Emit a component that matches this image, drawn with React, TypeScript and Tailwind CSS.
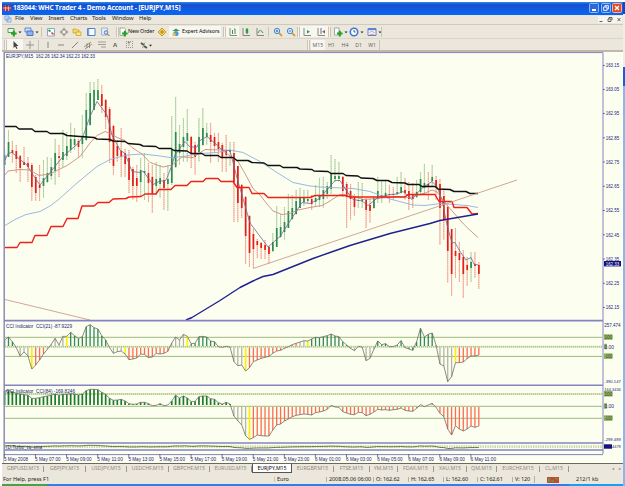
import type { ReactNode } from "react";

const STEP = 3.887;
const X0 = 4.6;
const cx = (i: number) => X0 + i * STEP;

// colour, high, body top, body bottom, low
type Candle = ["g" | "r", number, number, number, number];

const candles: Candle[] = [
  ["g", 150, 155, 165, 165], ["g", 130, 142, 157, 157], ["r", 141, 150, 153, 163], ["r", 145, 151, 159, 173],
  ["r", 155, 156, 168, 182], ["r", 147, 162, 165, 165], ["r", 157, 163, 167, 182], ["r", 163, 165, 187, 201],
  ["r", 175, 177, 193, 201], ["r", 165, 185, 188, 201], ["g", 160, 178, 186, 198], ["g", 157, 173, 182, 183],
  ["g", 158, 167, 176, 180], ["g", 139, 153, 171, 185], ["r", 145, 156, 158, 177], ["g", 130, 152, 160, 167],
  ["g", 132, 146, 156, 160], ["g", 123, 139, 150, 153], ["g", 128, 139, 145, 150], ["r", 139, 141, 147, 157],
  ["g", 115, 136, 144, 158], ["g", 93, 110, 140, 141], ["g", 82, 93, 125, 126], ["g", 82, 90, 110, 110],
  ["g", 79, 90, 100, 100], ["r", 85, 94, 106, 113], ["r", 99, 100, 117, 129], ["r", 107, 109, 142, 163],
  ["r", 125, 126, 166, 175], ["r", 140, 146, 156, 162], ["r", 128, 151, 157, 177], ["r", 149, 153, 164, 177],
  ["r", 150, 158, 180, 193], ["r", 167, 169, 186, 200], ["r", 165, 178, 186, 202], ["g", 158, 170, 182, 197],
  ["g", 153, 171, 173, 200], ["r", 163, 173, 183, 202], ["r", 165, 177, 194, 213], ["g", 162, 179, 186, 195],
  ["g", 165, 178, 184, 198], ["r", 173, 180, 188, 210], ["g", 165, 179, 184, 211], ["g", 116, 149, 183, 185],
  ["g", 97, 132, 167, 168], ["g", 125, 144, 153, 165], ["g", 118, 137, 147, 162], ["g", 109, 133, 141, 162],
  ["r", 136, 137, 153, 168], ["r", 142, 145, 157, 175], ["g", 118, 137, 152, 162], ["g", 108, 128, 145, 146],
  ["g", 123, 133, 137, 145], ["r", 123, 135, 142, 163], ["r", 133, 137, 146, 153], ["r", 133, 142, 149, 162],
  ["r", 143, 145, 158, 172], ["r", 135, 151, 155, 172], ["g", 142, 150, 152, 166], ["r", 142, 153, 182, 222],
  ["r", 166, 166, 203, 222], ["r", 184, 185, 208, 218], ["r", 196, 197, 236, 264], ["r", 215, 216, 253, 267],
  ["r", 229, 234, 249, 268], ["r", 239, 241, 245, 258], ["r", 242, 243, 248, 259], ["r", 240, 245, 250, 259],
  ["r", 246, 247, 254, 264], ["g", 233, 242, 251, 252], ["g", 206, 228, 247, 247], ["g", 214, 227, 237, 238],
  ["g", 207, 222, 232, 240], ["g", 194, 211, 228, 228], ["g", 195, 208, 219, 220], ["g", 190, 201, 214, 215],
  ["g", 188, 198, 208, 208], ["g", 190, 198, 202, 206], ["g", 190, 199, 201, 203], ["r", 195, 199, 204, 210],
  ["g", 185, 198, 202, 206], ["g", 178, 195, 200, 207], ["g", 177, 190, 199, 208], ["g", 182, 186, 194, 199],
  ["g", 155, 173, 189, 194], ["g", 159, 176, 179, 182], ["g", 162, 176, 179, 182], ["r", 176, 177, 191, 197],
  ["r", 182, 184, 197, 228], ["r", 184, 191, 199, 220], ["r", 194, 196, 207, 216], ["g", 182, 200, 201, 208],
  ["g", 183, 199, 201, 208], ["r", 198, 200, 210, 228], ["r", 199, 205, 211, 223], ["g", 196, 198, 208, 209],
  ["g", 177, 191, 199, 203], ["g", 180, 195, 198, 203], ["g", 181, 193, 197, 198], ["r", 185, 194, 195, 203],
  ["r", 187, 194, 195, 200], ["g", 177, 192, 194, 195], ["g", 172, 187, 193, 194], ["r", 178, 190, 193, 200],
  ["r", 182, 191, 199, 210], ["r", 183, 195, 199, 208], ["g", 180, 192, 197, 198], ["g", 172, 179, 192, 196],
  ["g", 164, 183, 188, 195], ["r", 172, 184, 186, 200], ["g", 165, 177, 181, 187], ["r", 176, 180, 187, 200],
  ["r", 179, 184, 208, 245], ["r", 189, 196, 220, 240], ["r", 206, 207, 251, 283], ["r", 229, 229, 274, 296],
  ["r", 228, 251, 256, 278], ["r", 242, 253, 260, 282], ["r", 250, 257, 274, 298], ["r", 257, 265, 270, 286],
  ["g", 252, 262, 268, 282], ["r", 252, 264, 266, 278], ["r", 262, 265, 274, 289],
];

const blackMa =
  "5,126.5 16,126.5 19,129 32,129 35,131.5 47,131.5 50,133.5 63,133.5 67,135.5 80,136.5 94,137.5 97,139 110,139.5 113,141 125,141.5 128,143.5 140,144.5 143,146 156,146.5 159,148.5 171,148.5 174,150.5 187,151 191,153.5 202,153.5 205,155.5 218,155.5 221,157.5 233,157.5 237,160.5 248,160.5 252,162.5 264,163 268,165.5 280,165.5 283,167.5 297,167.5 300,169 312,169.5 314,171 328,171.5 331,173.5 343,173.5 346,175.5 358,176 361,178 373,178.5 377,180.5 388,180.5 392,182.5 405,183 408,184.5 419,184.5 422,186.5 435,186.5 438,189 450,189.5 454,191.5 466,191.5 470,193.5 478,193.5";
const redMa =
  "5,247.5 17,247.5 20,242.5 32,242.5 35,235.5 47,235.5 51,226.5 63,226.5 67,218.5 78,218.5 82,206 94,206 98,202.5 109,202.5 113,199 126,198.5 129,197 141,196.5 145,194 156,194 159,189.5 171,189.5 175,185.5 187,185.5 191,181.5 203,181.5 206,178.5 218,178.5 221,181.5 233,181.5 237,187.5 249,187.5 252,193.5 264,193.5 268,197.5 310,197.5 315,195.5 345,195.5 350,197 405,197 408,194.5 435,194.5 439,201.5 452,201.5 454,207.5 467,207.5 472,214 478,213.5";
const brownMa =
  "5,175 8,171 20,169.5 30,170 39,175.5 50,174 67,165.5 80,156.5 90,143 97,135.5 105,131.5 112,134 117,137.5 125,140.5 132,147.5 142,154 150,162.5 163,167 172,165 182,157 193,157.5 205,149.5 222,150 232,157.5 238,161.5 245,173.5 253,188.5 260,195 267,204 273,211 282,214.5 290,213.5 298,210 310,207.5 322,205.5 330,201 340,194.5 350,195 363,199.5 377,198.5 397,196.5 410,197.5 425,193 432,190 437,192 443,200 450,208.5 460,220 467,227.5 478,237.5";
const skyMa =
  "5,225.5 15,219.5 26,214.5 40,211.5 50,206 58,200 77,183 97,166.5 110,159.5 127,155 143,154 160,156 170,157.5 183,156.5 200,153.5 217,152.5 230,150 243,152.5 260,161.5 277,172.5 293,182.5 310,186 320,187 353,188.5 370,191.5 390,199 413,205 425,205.5 440,203.5 467,205.5 478,207.5";
const fastMa =
  "5,160 8,153.5 12,152.5 20,159.5 27,165 33,175 40,185 48,175 63,156.5 78,143.5 83,136.5 90,116.5 97,101.5 107,115 112,135 120,150 125,153.5 132,171.5 140,172.5 143,171 153,184.5 160,181 165,181 167,178 172,165 175,155 185,141.5 190,147 197,147 200,140.5 207,136.5 217,145 222,150 230,150.5 237,178 242,195 250,223 268,247 280,236.5 292,218 302,202.5 310,203.5 318,199.5 327,190 335,180.5 340,180.5 347,191.5 353,199.5 362,201 368,205.5 378,197.5 390,194.5 397,194 403,191.5 412,199.5 420,190 423,187.5 432,181.5 437,186.5 442,200 447,225 452,243 455,242.5 460,251.5 466,260 471,257.5 474,264 478,265";
const navyMa =
  "186,320 192,317.5 220,300.5 240,287.5 253,281 263,276.5 273,274.5 313,258.5 330,252.5 350,245.5 390,233.5 430,223.5 440,220.5 478,214";

// Indicator curves, sampled once per candle, in thirds of a pixel below y = 315
const cci21 = [
  75, 66, 80, 98, 123, 111, 122, 162, 150, 135, 117, 103, 88, 70, 90, 64, 64, 52, 62, 71, 65, 35, 29, 38, 42, 62, 75,
  98, 115, 110, 108, 117, 134, 132, 129, 117, 118, 128, 126, 115, 117, 115, 109, 84, 66, 75, 58, 64, 86, 85, 65, 64,
  66, 78, 80, 95, 97, 94, 96, 140, 152, 150, 168, 158, 140, 135, 130, 127, 124, 115, 108, 106, 100, 95, 89, 85, 81,
  77, 78, 72, 67, 68, 65, 62, 57, 63, 65, 80, 90, 100, 107, 94, 96, 137, 130, 103, 78, 89, 86, 95, 95, 90, 77, 98,
  102, 106, 80, 40, 66, 58, 54, 90, 147, 153, 200, 185, 143, 143, 141, 131, 123, 123, 120,
];
const cci84 = [
  228, 226, 230, 235, 237, 239, 241, 250, 250, 248, 245, 243, 240, 237, 241, 238, 238, 236, 237, 240, 237, 227, 223,
  223, 224, 232, 238, 250, 256, 255, 253, 258, 266, 268, 267, 262, 262, 266, 272, 271, 266, 272, 270, 258, 241, 249,
  243, 249, 260, 259, 245, 243, 243, 251, 253, 263, 267, 262, 267, 303, 317, 330, 362, 373, 368, 360, 362, 363, 363,
  345, 330, 327, 318, 312, 305, 301, 299, 297, 298, 300, 293, 291, 288, 283, 271, 276, 277, 290, 294, 298, 299, 292,
  293, 302, 298, 291, 283, 285, 284, 286, 284, 283, 279, 286, 288, 289, 280, 269, 275, 270, 265, 277, 295, 305, 342,
  360, 332, 342, 348, 342, 333, 337, 333,
];
const GREEN = "#2f8a55";
const DARK = "#1c7a2c";
const GRAY = "#b4b4a8";
const YELLOW = "#ffee00";
const RED = "#ff6a50";

const runs21: [number, string][] = [
  [3, GREEN], [7, GRAY], [8, YELLOW], [11, RED], [16, GRAY], [17, YELLOW], [27, GREEN], [31, GRAY], [32, YELLOW],
  [43, RED], [47, GRAY], [48, YELLOW], [55, GREEN], [62, GRAY], [63, YELLOW], [76, RED], [78, GRAY], [79, YELLOW],
  [90, GREEN], [96, GRAY], [111, GREEN], [116, GRAY], [117, YELLOW], [123, RED],
];
const runs84: [number, string][] = [[59, DARK], [63, GRAY], [64, YELLOW], [123, RED]];

const ly = (v: number) => 315 + v / 3;

function Oscillator({ data, up, down, runs }: { data: number[]; up: number; down: number; runs: [number, string][] }) {
  return (
    <g>
      {data.map((v, i) => {
        const y = ly(v);
        const color = runs.find(([end]) => i < end)![1];
        const base = y < up ? up : down;
        if (y >= up && y <= down) return null;
        return <line key={i} x1={cx(i)} x2={cx(i)} y1={base} y2={y} stroke={color} strokeWidth={color === YELLOW || color === DARK ? 1.7 : 1.3} />;
      })}
      <polyline points={data.map((v, i) => `${cx(i)},${ly(v)}`).join(" ")} fill="none" stroke="#6e6e6a" strokeWidth={0.8} />
    </g>
  );
}

const prices: [string, number][] = [
  ["163.15", 65.5], ["163.05", 89.5], ["162.95", 113.5], ["162.85", 137.8], ["162.75", 162], ["162.65", 186.3],
  ["162.55", 210.5], ["162.45", 234.8], ["162.35", 259], ["162.25", 283.3], ["162.15", 307.5],
];

const times = [
  "5 May 2008", "5 May 07:00", "5 May 09:00", "5 May 11:00", "5 May 13:00", "5 May 15:00", "5 May 17:00", "5 May 19:00",
  "5 May 21:00", "5 May 23:00", "6 May 01:00", "6 May 03:00", "6 May 05:00", "6 May 07:00", "6 May 09:00", "6 May 11:00",
];

type LabelProps = { x: number; y: number; w: number; children: string; fill?: string; size?: number };

function Label({ x, y, w, children, fill = "#20207c", size = 5 }: LabelProps) {
  return (
    <text x={x} y={y} textLength={w} lengthAdjust="spacingAndGlyphs" fontSize={size} fill={fill} className="whitespace-pre">
      {children}
    </text>
  );
}

function Level({ y, label, pale }: { y: number; label: string; pale?: boolean }) {
  const zero = label === "0.00";
  return (
    <g>
      {pale && <line x1={5} x2={602} y1={y} y2={y} stroke="#dbe6c0" strokeWidth={2} />}
      <line x1={5} x2={602} y1={y} y2={y} stroke="#94b070" strokeWidth={0.9} strokeDasharray={pale ? "1 1" : undefined} />
      <rect x={604} y={y - 3} width={zero ? 3 : 8.5} height={5.5} fill="#90b060" />
      <Label x={604.5} y={y + 1.8} w={zero ? 9.5 : 7.8} fill={zero ? "#20207c" : "#34501c"}>
        {label}
      </Label>
    </g>
  );
}

function Chart() {
  return (
    <svg className="block h-[411px] w-[619px] bg-[#fcfff0]" viewBox="3 52 619 411" fontFamily='"Liberation Sans", sans-serif'>
      <Label x={6} y={58.4} w={89}>EURJPY,M15  162.26 162.34 162.23 162.33</Label>

      {candles.map(([c, hi, top, bot, lo], i) => (
        <g key={i}>
          <line x1={cx(i)} x2={cx(i)} y1={hi} y2={lo} stroke={c === "g" ? "#c6dcb8" : "#fac4b2"} strokeWidth={1.1} />
          <line x1={cx(i)} x2={cx(i)} y1={hi} y2={lo} stroke={c === "g" ? "#a4c896" : "#f08c7c"} strokeWidth={0.8} strokeDasharray="1.2 1" />
          <rect x={cx(i) - 0.8} y={top} width={1.7} height={Math.max(bot - top, 1)} fill={c === "g" ? "#2c8c50" : "#e81c14"} />
        </g>
      ))}

      <g fill="none" strokeLinejoin="round">
        <polyline points={skyMa} stroke="#90b0dc" strokeWidth={0.9} />
        <polyline points={brownMa} stroke="#cc8c78" strokeWidth={0.9} />
        <polyline points={fastMa} stroke="#6c6898" strokeWidth={0.8} />
        <polyline points={redMa} stroke="#f02018" strokeWidth={1.4} />
        <polyline points={blackMa} stroke="#101010" strokeWidth={1.4} />
        <polyline points={navyMa} stroke="#202090" strokeWidth={1.4} />
        <path d="M253 268.5L517 180M5 299.5L90 320" stroke="#cc9c8c" strokeWidth={0.9} />
      </g>

      <Level y={337.3} label="100" />
      <Level y={346.8} label="0.00" pale />
      <Level y={356.4} label="-100" />
      <Oscillator data={cci21} up={346} down={347.6} runs={runs21} />
      <Label x={6} y={328.3} w={66}>CCI Indicator  CCI(21) -87.9229</Label>

      <Level y={394} label="100" pale />
      <Level y={406.3} label="0.00" />
      <Level y={418.3} label="-100" />
      <Oscillator data={cci84} up={405} down={407} runs={runs84} />
      <Label x={6} y={392.6} w={69}>CCI Indicator  CCI(84) -169.8246</Label>

      <line x1={5} x2={602} y1={446.6} y2={446.6} stroke="#ccd8a8" strokeWidth={2.6} strokeDasharray="1.4 1" />
      <polyline
        points={cci84.map((v, i) => `${cx(i)},${446.6 + (cci21[i] - 100 + v - 270) / 90}`).join(" ")}
        fill="none"
        stroke="#5c7038"
        strokeWidth={0.9}
      />
      <Label x={6} y={449.2} w={36}>(1) Turbo_vq_sma</Label>

      <g stroke="#8484c0" strokeWidth={1.6}>
        <path d="M4 320.6H603M4 385.3H603M4 443H603M4 450H603" />
        <path d="M4.4 52.5V454M603 52.5V454M4 52.6H603M4 454.6H603" strokeWidth={1} />
      </g>
      <path d="M3.3 52V463" stroke="#a8a8a0" strokeWidth={0.8} />

      {prices.map(([p, y]) => (
        <g key={p}>
          <line x1={603} x2={604.8} y1={y} y2={y} stroke="#5050a0" strokeWidth={0.9} />
          <Label x={605.7} y={y + 1.8} w={13.5} size={4.9}>{p}</Label>
        </g>
      ))}
      <rect x={604} y={261} width={17} height={5.4} fill="#10107c" />
      <Label x={605.7} y={265.5} w={13.5} size={4.9} fill="#ffffff">162.33</Label>
      <Label x={604.3} y={326.6} w={16.3} size={4.5}>257.474</Label>
      <Label x={604.3} y={383.2} w={16.5} size={4.3}>-390.147</Label>
      <Label x={604.3} y={391} w={16.5} size={4.2}>164.3434</Label>
      <Label x={604.3} y={441} w={16.5} size={4.3}>-299.489</Label>
      <rect x={604} y={444.3} width={8} height={4.4} fill="#10107c" />
      <Label x={604.3} y={448.4} w={16.5} size={4.2}>0.004479</Label>

      {times.map((t, i) => (
        <g key={t}>
          <line x1={4.4 + i * 31.1} x2={4.4 + i * 31.1} y1={454} y2={457.5} stroke="#5050a0" strokeWidth={0.8} />
          <Label x={4 + i * 31.1} y={461} w={i === 0 ? 24 : 25.5}>{t}</Label>
        </g>
      ))}
    </svg>
  );
}

function Icon({ w, children, on }: { w: string; children: ReactNode; on?: boolean }) {
  return (
    <span className={`flex h-[11px] shrink-0 items-center justify-center ${w} ${on ? "bg-[#f8f6f0]" : ""}`}>
      <svg className="h-[10px] w-[10px] overflow-visible" viewBox="0 0 10 10" fill="none" strokeWidth={1}>
        {children}
      </svg>
    </span>
  );
}

function Grip() {
  return <span className="block h-[10px] w-[3px] shrink-0 border-x border-[#c9c4b4] bg-[#f6f3ea]" />;
}

const Plus = () => <path d="M4 6.5H9.6M6.8 3.8V9.4" stroke="#20a028" strokeWidth={2} />;
const Drop = () => <path d="M11.5 4.5h3L13 6.300z" fill="#222" />;

function Toolbar() {
  return (
    <div className="flex h-[14px] items-center border-t border-[#cfcabc] pl-px">
      <Icon w="w-[17px]"><path d="M1 1.5h6v4h-6z" fill="#f4f8f0" stroke="#58a058" /><Plus /><Drop /></Icon>
      <Icon w="w-[17px]"><path d="M1 1h6v4H1z" fill="#cfe0fa" stroke="#5c88cc" /><path d="M3 4h6v4.5H3z" fill="#8cb4f0" stroke="#4878c8" /><Drop /></Icon>
      <span className="ml-[4px] mr-[2px] h-[10px] w-px bg-[#c9c4b4]" />
      <Icon w="w-[13px]"><path d="M1.5 1.5h7v7.5h-7z" fill="#fff" stroke="#88a8cc" /><path d="M2.5 3l2 1.5" stroke="#20a040" strokeWidth={1.6} /><path d="M5.5 5.5l2 2" stroke="#e04030" strokeWidth={1.7} /></Icon>
      <Icon w="w-[13px]"><circle cx="5" cy="5" r="2.6" stroke="#8c8c84" /><path d="M5 .5v3M5 6.500v3M.5 5h3M6.500 5h3" stroke="#8c8c84" /></Icon>
      <Icon w="w-[14px]"><path d="M1 2h3l1 1h2v3H1z" fill="#f8dc60" stroke="#cc9820" strokeWidth={0.7} /><path d="M4 5h5v3.500h-5z" fill="#fbe884" stroke="#cc9820" strokeWidth={0.7} /></Icon>
      <Icon w="w-[14px]"><path d="M1.500 1.500h7.500v7h-7.500z" fill="#fff" stroke="#4c80d0" /><path d="M2.500 2v6" stroke="#78a4e8" strokeWidth={1.5} /></Icon>
      <Icon w="w-[14px]"><path d="M1.500 1h6v7h-6z" fill="#e8eef8" stroke="#a0b0c8" /><circle cx="6" cy="5.500" r="1.800" fill="#c4dcf4" stroke="#5c88b8" /><path d="M7.500 7l2 2" stroke="#806840" /></Icon>
      <span className="ml-[4px]"><Grip /></span>
      <Icon w="w-[8px]"><path d="M2 1h4.500l1 1.500v6H2z" fill="#fff" stroke="#88a088" strokeWidth={0.8} /><Plus /></Icon>
      <span className="w-[28px] whitespace-nowrap pl-[1px] text-[5.4px] tracking-[-0.15px] text-[#111]">New Order</span>
      <Icon w="w-[14px]"><path d="M5 1l4 4-4 4-4-4z" fill="#f8d850" stroke="#c89830" /><path d="M5 3v4M3 5h4" stroke="#a07020" strokeWidth={0.8} /></Icon>
      <span className="flex h-[11px] w-[52px] items-center bg-[#f8f6f0]">
        <Icon w="w-[13px]"><path d="M1 4l4-2.500 4 2.500z" fill="#40a048" /><circle cx="5" cy="6.500" r="2.600" fill="#4c98d8" /><path d="M1.500 6h3v3h-3z" fill="#ecc040" /></Icon>
        <span className="whitespace-nowrap text-[5.4px] tracking-[-0.12px] text-[#111]">Expert Advisors</span>
      </span>
      <span className="ml-[2px]"><Grip /></span>
      <Icon w="w-[13px]" on><path d="M2 1v7.500h7" stroke="#888880" /><path d="M4.500 3v4M7 2v5M6 2h1" stroke="#309848" /></Icon>
      <Icon w="w-[14px]"><path d="M2 1v7.500h7" stroke="#888880" /><path d="M6 1v6" stroke="#309848" /><path d="M6 2v4" stroke="#20a040" strokeWidth={2.4} /></Icon>
      <Icon w="w-[13px]"><path d="M2 1v7.500h7" stroke="#888880" /><path d="M3 6c2-4 3-3 5 0" stroke="#309848" /></Icon>
      <span className="mx-[2px] h-[10px] w-px bg-[#c9c4b4]" />
      <Icon w="w-[13px]"><path d="M6 6l3 3" stroke="#d8a030" strokeWidth={1.8} /><circle cx="4" cy="4" r="2.700" fill="#d8ecfc" stroke="#4888d0" /><path d="M2.800 4h2.400M4 2.800v2.400" stroke="#2060c0" strokeWidth={0.8} /></Icon>
      <Icon w="w-[13px]"><path d="M6 6l3 3" stroke="#d8a030" strokeWidth={1.8} /><circle cx="4" cy="4" r="2.700" fill="#d8ecfc" stroke="#4888d0" /><path d="M2.800 4h2.400" stroke="#2060c0" strokeWidth={0.8} /></Icon>
      <Grip />
      <Icon w="w-[14px]" on><path d="M2 1v7.500h7" stroke="#888880" /><path d="M5 3l3 1.800-3 1.800z" fill="#20a040" /></Icon>
      <Icon w="w-[14px]" on><path d="M2 1v7.500h7" stroke="#888880" /><path d="M5 1v6" stroke="#5878a8" /><path d="M9 3L6 4.800l3 1.800z" fill="#c04828" /></Icon>
      <Grip />
      <Icon w="w-[14px]"><path d="M1.500 1h4.500v7H1.500z" fill="#fff" stroke="#889888" strokeWidth={0.8} /><Plus /><Drop /></Icon>
      <Icon w="w-[18px]"><circle cx="5" cy="5" r="3.700" fill="#fff" stroke="#3878d8" strokeWidth={1.6} /><path d="M5 3v2h1.500" stroke="#333" strokeWidth={0.8} /><Drop /></Icon>
      <Icon w="w-[17px]"><path d="M1 1.500h8v7H1z" fill="#fff" stroke="#5888d0" /><path d="M1 2.500h8" stroke="#5888d0" strokeWidth={1.5} /><path d="M2.500 5.500l2-1 3 1M2.500 7.300h5" stroke="#d06050" strokeWidth={0.7} /><Drop /></Icon>
      <span className="ml-px h-[10px] w-px bg-[#c9c4b4]" />
    </div>
  );
}

function DrawBar() {
  return (
    <div className="flex h-[12px] items-center border-t border-[#dad5c8] pl-[2px]">
      <Grip />
      <Icon w="w-[16px]" on><path d="M3.500 1v7l1.600-1.600L6.500 9l1-.5-1.200-2.500h2.200z" fill="#444" /></Icon>
      <Icon w="w-[13px]"><path d="M5 1v8M1 5h8" stroke="#98948a" /></Icon>
      <span className="mx-[2px] h-[10px] w-px bg-[#c9c4b4]" />
      <Icon w="w-[13px]"><path d="M5 2v6" stroke="#88847a" /></Icon>
      <Icon w="w-[14px]"><path d="M2 5h6" stroke="#88847a" /></Icon>
      <Icon w="w-[13px]"><path d="M2 8l6-6" stroke="#88847a" /></Icon>
      <Icon w="w-[14px]"><path d="M1 7l7-5M2 9l7-5M4 3v5M6.500 3v5" stroke="#807c72" strokeWidth={0.8} /></Icon>
      <Icon w="w-[13px]"><path d="M1 2h8M1 4.500h8M4 7h5" stroke="#98948a" strokeWidth={0.9} /></Icon>
      <span className="w-[14px] text-center text-[6px] font-bold leading-none text-[#6c685e]">A</span>
      <span className="flex w-[14px] justify-center"><span className="h-[7px] w-[7px] border border-dotted border-[#98948a] text-center text-[5px] leading-[5px] text-[#555]">T</span></span>
      <Icon w="w-[15px]"><path d="M2 3l3 2M5 6l3 2" stroke="#505048" strokeWidth={1.8} /><path d="M6 2.500L3.500 8" stroke="#807c72" strokeWidth={0.7} /><path d="M10 4.800h3l-1.500 1.800z" fill="#222" /></Icon>
      <span className="ml-[156px] mr-px"><Grip /></span>
      {["M15", "H1", "H4", "D1", "W1"].map((t, i) => (
        <span key={t} className={`w-[13.6px] text-center text-[5.2px] leading-[10px] text-[#66625a] ${i === 0 ? "bg-[#f8f6f0]" : ""}`}>{t}</span>
      ))}
      <span className="h-[10px] w-px bg-[#c9c4b4]" />
    </div>
  );
}

const menu: [string, string][] = [
  ["File", "w-[15px]"], ["View", "w-[18.5px]"], ["Insert", "w-[21.5px]"], ["Charts", "w-[22px]"],
  ["Tools", "w-[20px]"], ["Window", "w-[27px]"], ["Help", "w-[20px]"],
];

const tabs: [string, string][] = [
  ["GBPUSD,M15", "w-[41px]"], ["GBPJPY,M15", "w-[42px]"], ["USDJPY,M15", "w-[41px]"], ["USDCHF,M15", "w-[42px]"],
  ["GBPCHF,M15", "w-[41px]"], ["EURUSD,M15", "w-[42px]"], ["EURJPY,M15", "w-[40px]"], ["EURGBP,M15", "w-[42px]"],
  ["FTSE,M15", "w-[36px]"], ["YM,M15", "w-[28px]"], ["FDAX,M15", "w-[36px]"], ["XAU,M15", "w-[33px]"],
  ["QM,M15", "w-[30px]"], ["EURCHF,M15", "w-[43px]"], ["CL,M15", "w-[29px]"],
];

const status: [string, string][] = [
  ["2008.05.06 06:00", "w-[47px]"], ["O: 162.62", "w-[35px]"], ["H: 162.65", "w-[35px]"], ["L: 162.60", "w-[34px]"],
  ["C: 162.61", "w-[35px]"], ["V: 120", "w-[22px]"],
];

export default function App() {
  return (
    <div className="flex h-[486px] w-[625px] overflow-hidden bg-white font-['Noto_Sans','Liberation_Sans',sans-serif]">
      <div className="flex w-[623px] flex-col pl-[2px] pt-[2px]">
        <header className="flex h-[12.5px] shrink-0 items-center bg-linear-to-b from-[#2c8cf4] via-[#1650cc] via-20% to-[#0468f8] px-px">
          <svg className="mr-[2px] h-[8px] w-[8px]" viewBox="0 0 8 8">
            <rect y="1" width="8" height="6" fill="#c83038" />
            <path d="M0 4h8M2.500 1v6M5.500 1v6" stroke="#f4c8c8" strokeWidth=".8" />
            <path d="M0 2h8" stroke="#383878" strokeWidth="1" />
          </svg>
          <span className="whitespace-nowrap font-['Open_Sans','Noto_Sans',sans-serif] text-[6.6px] font-bold tracking-[-0.12px] text-white">
            183044: WHC Trader 4 - Demo Account - [EURJPY,M15]
          </span>
          <div className="ml-auto flex gap-[1.5px]">
            <span className="flex h-[10px] w-[10px] items-end rounded-[1.5px] border border-[#8cb8f8] bg-[#2c68dc] p-[1.5px]"><span className="h-[1.5px] w-[4px] bg-white" /></span>
            <span className="flex h-[10px] w-[10px] items-center justify-center rounded-[1.5px] border border-[#8cb8f8] bg-[#2c68dc]">
              <svg className="h-[6px] w-[6px]" viewBox="0 0 6 6" fill="none" stroke="#fff" strokeWidth=".9"><path d="M2 2V.6h3.400V4H4M.6 2h3.400v3.400H.6z" /></svg>
            </span>
            <span className="flex h-[10px] w-[10px] items-center justify-center rounded-[1.5px] border border-[#f4b4a0] bg-[#e04c28]">
              <svg className="h-[6px] w-[6px]" viewBox="0 0 6 6" stroke="#fff" strokeWidth="1.300"><path d="M1 1l4 4M5 1L1 5" /></svg>
            </span>
          </div>
        </header>

        <nav className="flex h-[9.5px] shrink-0 items-center bg-[#ece7dc] pl-[2px] text-[5.9px] leading-none tracking-[-0.15px] text-[#222]">
          <svg className="mr-[3px] h-[8px] w-[8px]" viewBox="0 0 8 8"><path d="M1 1h4v4H1zM3 3h4v4H3z" fill="#dceafc" stroke="#6c9cdc" strokeWidth=".8" /></svg>
          {menu.map(([m, w]) => (
            <span key={m} className={w}>{m}</span>
          ))}
          <svg className="ml-auto mr-px h-[7px] w-[24px] bg-[#f8f6f0]" viewBox="0 0 24 7" fill="none" stroke="#66625a" strokeWidth="1">
            <path d="M1.500 5.500h3M11 3V1.500h3V4M10 3h3v2.500h-3zM19.500 2l3 3.200M22.500 2l-3 3.200" />
          </svg>
        </nav>

        <div className="h-[28px] shrink-0 border-b-2 border-[#c0b8ac] bg-[#ece7dc]">
          <Toolbar />
          <DrawBar />
        </div>

        <main className="h-[411px] shrink-0 pl-px">
          <Chart />
        </main>

        <div className="flex h-[10px] shrink-0 border-t border-[#6c6860] bg-[#ece7dc] pl-px text-[5.2px] leading-[9px]">
          {tabs.map(([t, w]) =>
            t === "EURJPY,M15" ? (
              <span key={t} className={`${w} border-x border-b border-[#555] bg-white text-center text-black`}>{t}</span>
            ) : (
              <span key={t} className={`${w} flex items-center justify-center text-[#8c887e]`}>
                <span className="grow text-center">{t}</span>
                <span className="h-[6px] w-px bg-[#9c988c]" />
              </span>
            ),
          )}
          <span className="ml-auto flex gap-[5px] pr-[2px] text-[4px] text-[#777]"><span>◂</span><span>▸</span></span>
        </div>

        <footer className="flex h-[11px] shrink-0 items-center bg-[#ece7dc] pl-px pt-[2px] text-[5.5px] leading-none text-[#222]">
          <span className="w-[271px]">For Help, press F1</span>
          <span className="w-[52px] border-l border-[#c9c4b4] pl-[2px]">Euro</span>
          {status.map(([s, w]) => (
            <span key={s} className={`${w} whitespace-nowrap border-l border-[#b4b0a4] pl-[2px] tracking-[-0.1px]`}>{s}</span>
          ))}
          <span className="flex h-[7px] w-[39px] items-center border-l border-[#b4b0a4] pl-[12px]">
            <svg className="h-[6px] w-[12px]" viewBox="0 0 12 6">
              <rect width="12" height="6" fill="#c84838" />
              <path d="M1 1h2v4H1zM4.500 3h2v2h-2zM8 1h2.500v1.500H8z" fill="#58a040" />
            </svg>
          </span>
          <span className="whitespace-nowrap pl-[3px]">212/1 kb</span>
        </footer>

        <div className="flex h-[2px] shrink-0">
          <span className="w-[45px] bg-[#48a048]" />
          <span className="w-[522px] bg-[#3080e4]" />
          <span className="grow bg-[#18a0f0]" />
        </div>
      </div>

      <aside className="flex w-[2px] flex-col pt-[2px]">
        <span className="h-[12px] bg-[#1848c0]" />
        <span className="h-[53px] bg-[#f0ede6]" />
        <span className="h-[19px] bg-[#1c5cd8]" />
        <span className="grow bg-[#90b4ec]" />
      </aside>
    </div>
  );
}
